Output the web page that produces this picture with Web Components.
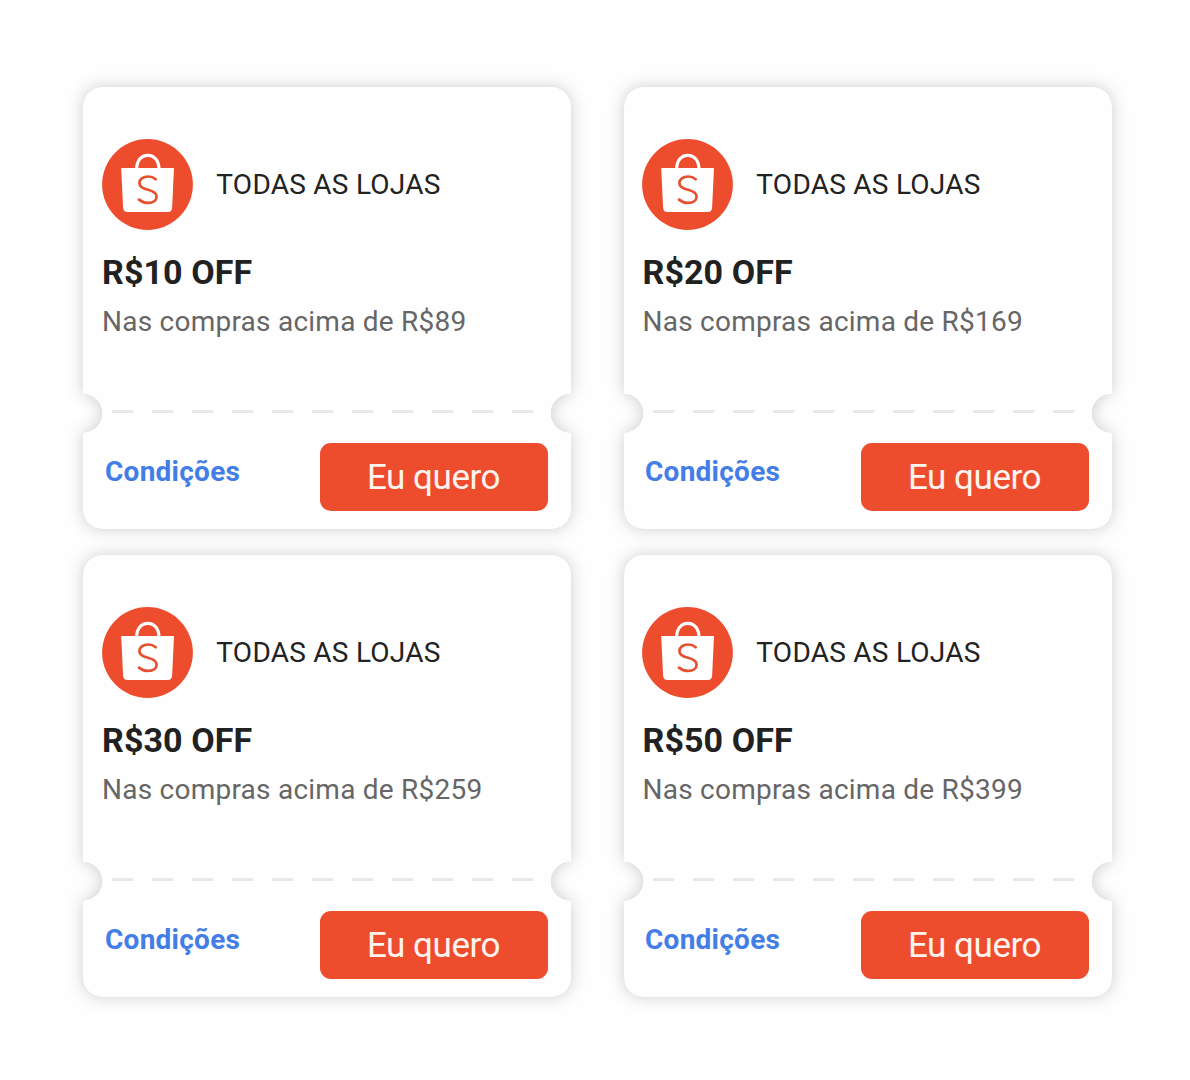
<!DOCTYPE html>
<html lang="pt-BR">
<head>
<meta charset="utf-8">
<title>Cupons</title>
<style>
  body { margin: 0; background: #fefefe; font-family: Roboto, "Liberation Sans", sans-serif; }
  coupon-card:nth-child(even) { --logo-inset: 18px; --text-inset: 18.5px; --terms-inset: 21px; }
</style>
</head>
<body>
<coupon-grid>
  <coupon-card><span slot="value">R$10 OFF</span><span slot="rule">Nas compras acima de R$89</span></coupon-card>
  <coupon-card><span slot="value">R$20 OFF</span><span slot="rule">Nas compras acima de R$169</span></coupon-card>
  <coupon-card><span slot="value">R$30 OFF</span><span slot="rule">Nas compras acima de R$259</span></coupon-card>
  <coupon-card><span slot="value">R$50 OFF</span><span slot="rule">Nas compras acima de R$399</span></coupon-card>
</coupon-grid>
<script>
class BaseElement extends HTMLElement {
  constructor() {
    super();
    this.attachShadow({ mode: 'open' }).innerHTML = this.constructor.markup;
  }
}

class CouponGrid extends BaseElement {
  static markup = `
    <style>
      :host { display: grid; box-sizing: border-box; width: 1190px; height: 1080px;
        padding: 87px 0 0 83px; grid-template-columns: 488px 488px; grid-auto-rows: 442px;
        column-gap: 53px; row-gap: 26px; align-content: start; }
    </style>
    <slot></slot>`;
}

class StoreLogo extends BaseElement {
  static markup = `
    <style>:host { display: block; width: 91px; height: 91px; flex: none; } svg { display: block; }</style>
    <svg width="91" height="91" viewBox="0 0 91 91" fill="none">
      <circle cx="45.5" cy="45.5" r="45.4" fill="#ee4d2d"/>
      <path d="M34.6 30.5C34.6 21.5 39.4 16.4 45.8 16.4S57 21.5 57 30.5" stroke="#fff" stroke-width="3.2"/>
      <path d="M19.2 29H72L70.1 68.8Q69.8 73 65.8 73H25.4Q21.4 73 21.1 68.8Z" fill="#fff"/>
      <path d="M53.7 40.2C51.6 38.4 49.2 37.5 46.2 37.5C41 37.5 37.4 40.3 37.4 43.9C37.4 48 41 49.5 46 50.8C51.6 52.3 54.6 54 54.6 57.6C54.6 61.4 51.2 63.9 46.2 63.9C42.6 63.9 39.6 62.8 37 60.6" stroke="#e5502f" stroke-width="2.7" stroke-linecap="round"/>
    </svg>`;
}

class ActionButton extends BaseElement {
  static markup = `
    <style>
      :host { display: block; }
      button { display: flex; align-items: center; justify-content: center; box-sizing: border-box;
        width: 228px; height: 68px; margin: 0; padding: 1px 1px 0 0; border: 0; border-radius: 11px;
        background: #ee4d2d; color: #fff3ef; letter-spacing: -.45px;
        font: 400 35px/41px Roboto, "Liberation Sans", sans-serif; }
    </style>
    <button><slot></slot></button>`;
}

class CouponCard extends BaseElement {
  static markup = `
    <style>
      :host { display: grid; width: 488px; height: 442px; }
      .shape, .content { grid-area: 1 / 1; }
      .shape { display: block; overflow: visible;
        filter: drop-shadow(0 0 .7px rgba(0,0,0,.15)) drop-shadow(0 0 8px rgba(0,0,0,.19)); }
      .content { display: flex; flex-direction: column; z-index: 1; }
      .store { display: flex; align-items: center; gap: 23.3px; padding: 52px 0 0 var(--logo-inset, 19px);
        color: #222; font-size: 28px; line-height: 34px; letter-spacing: .25px; }
      .value { padding: 21px 0 0 var(--text-inset, 19px); color: #212121; font-size: 34px;
        line-height: 42px; font-weight: 700; letter-spacing: .1px; }
      .rule { padding: 12px 0 0 var(--text-inset, 19px); color: #666; font-size: 28px;
        line-height: 34px; letter-spacing: .24px; }
      .tear { margin: 71px 37px 0 29px; height: 3px;
        background: repeating-linear-gradient(90deg, #e8e8e8 0 21px, transparent 21px 40px); }
      .actions { display: flex; justify-content: space-between; padding: 30px 23px 0 var(--terms-inset, 22px); }
      .terms { padding-top: 12px; color: #437de8; font-size: 28px; line-height: 34px; font-weight: 700;
        letter-spacing: .25px; text-decoration: none; }
    </style>
    <svg class="shape" width="488" height="442" viewBox="0 0 488 442">
      <path fill="#fefefe" d="M19 0H469A19 19 0 0 1 488 19V306.8L487 307A19.2 19.2 0 0 0 487 345.4L488 345.6V423A19 19 0 0 1 469 442H19A19 19 0 0 1 0 423V345.4A19.2 19.2 0 0 0 0 307V19A19 19 0 0 1 19 0Z"/>
    </svg>
    <div class="content">
      <div class="store"><store-logo></store-logo><span>TODAS AS LOJAS</span></div>
      <div class="value"><slot name="value"></slot></div>
      <div class="rule"><slot name="rule"></slot></div>
      <div class="tear"></div>
      <div class="actions"><a class="terms">Condições</a><action-button>Eu quero</action-button></div>
    </div>`;
}

customElements.define('store-logo', StoreLogo);
customElements.define('action-button', ActionButton);
customElements.define('coupon-card', CouponCard);
customElements.define('coupon-grid', CouponGrid);
</script>
</body>
</html>
